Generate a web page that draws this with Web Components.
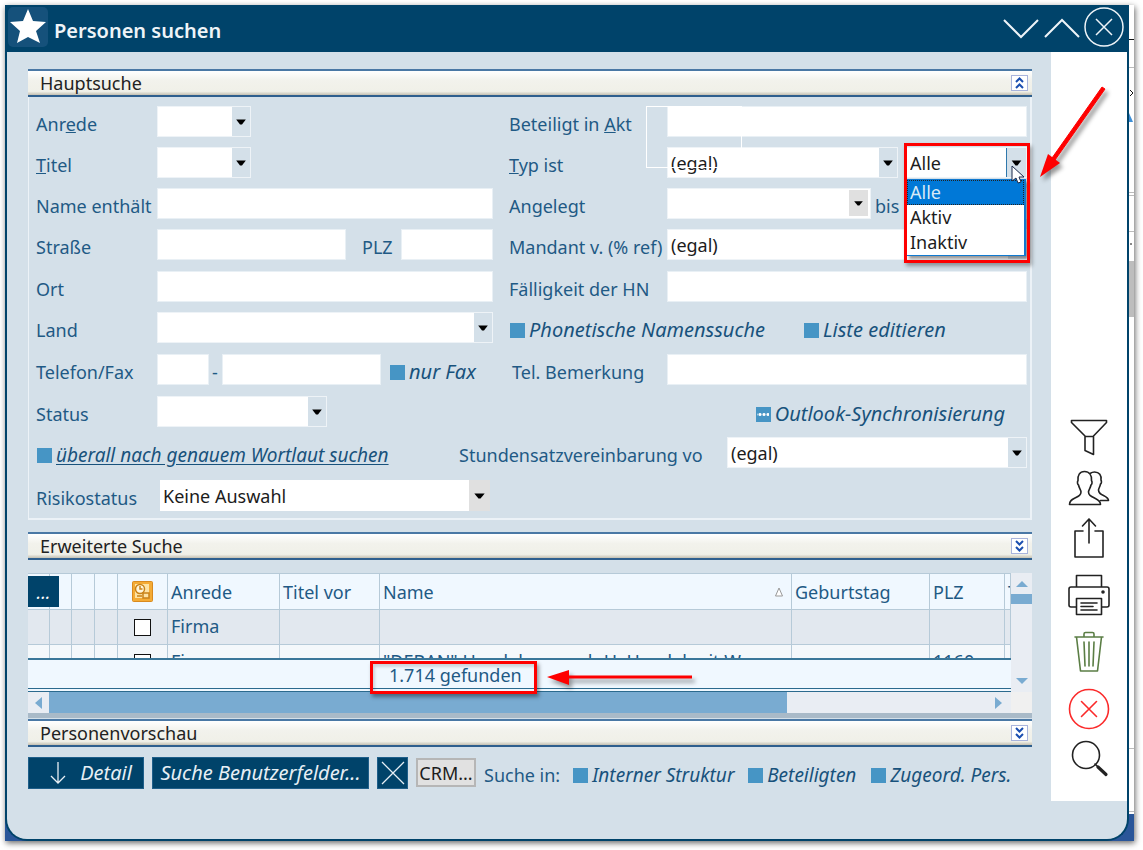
<!DOCTYPE html>
<html lang="de">
<head>
<meta charset="utf-8">
<title>Personen suchen</title>
<style>
  html { background: #fff; }
  body { margin: 0; padding: 5px 9px 9px 5px; font: 18px/26px "Noto Sans", "Open Sans", sans-serif; color: #1f5a85; }
</style>
</head>
<body>
<person-search></person-search>

<template id="t-person-search">
  <style>
    :host { display: flex; box-shadow: 1px 2px 6px rgba(0,0,0,.6); background: linear-gradient(#fff 0 0) top / 100% calc(100% - 27px) no-repeat #2a5699; }
    app-window { flex: 1; min-width: 0; }
    .columns { display: flex; justify-content: space-between; align-items: flex-start; padding-bottom: 37px; }
    main { flex: 1; min-width: 0; padding: 17px 19px 0 21px; }
    .frame { border: 1px solid #ecf2f7; border-width: 0 2px 2px 1px; margin-bottom: 12px; padding: 9px 3px 7px 7px;
      display: grid; grid-template-rows: 41px 41px 41px 42px 41px 42px 42px 41px 43px 31px; }
    text-field, combo-field { --label: 121px; }
    [slot=end] { --label: 158px; }
    .grow { flex: 1; }
    .short { width: 215px; }
    .tight { --label: 13px; }
    result-grid { margin: 13px 0 1px; }
    .picker { position: relative; width: 123px; margin-left: 6px; }
    .actions { display: flex; gap: 8px; padding-top: 10px; height: 32px; align-items: flex-start; white-space: nowrap; }
    .focus { position: absolute; left: 137px; top: 0; width: 94px; height: 60px; border: 1px solid #fff; z-index: 2; pointer-events: none; }
    form-row { position: relative; }
    .in { padding: 5px 4px 0 0; }
    side-strip { flex: none; }
    .exact, .actions check-field { --slant-size: 19px; }
  </style>
  <app-window>
    <span slot="title">Personen suchen</span>
    <div class="columns">
      <main>
        <section-head open>Hauptsuche</section-head>
        <div class="frame">
          <form-row>
            <combo-field slot="start" class="short">Anr<u>e</u>de</combo-field>
            <text-field slot="end" class="grow">Beteiligt in <u>A</u>kt</text-field>
            <div slot="end" class="focus"></div>
          </form-row>
          <form-row>
            <combo-field slot="start" class="short"><u>T</u>itel</combo-field>
            <combo-field slot="end" class="grow" value="(egal)"><u>T</u>yp ist</combo-field>
            <state-picker slot="end" class="picker"></state-picker>
          </form-row>
          <form-row>
            <text-field slot="start" class="grow">Name enthält</text-field>
            <combo-field slot="end" class="grow" grey>Angelegt</combo-field>
            <text-field slot="end" style="--label:29px;width:152px;margin-left:4px">bis</text-field>
          </form-row>
          <form-row>
            <text-field slot="start" class="grow">Straße</text-field>
            <text-field slot="start" style="--label:39px;width:131px;margin-left:16px">PLZ</text-field>
            <combo-field slot="end" class="grow" value="(egal)">Mandant v. (% ref)</combo-field>
          </form-row>
          <form-row>
            <text-field slot="start" class="grow">Ort</text-field>
            <text-field slot="end" class="grow">Fälligkeit der HN</text-field>
          </form-row>
          <form-row>
            <combo-field slot="start" class="grow">Land</combo-field>
            <check-field slot="end" style="width:294px">Phonetische Namenssuche</check-field>
            <check-field slot="end">Liste editieren</check-field>
          </form-row>
          <form-row>
            <text-field slot="start" style="width:173px">Telefon/Fax</text-field>
            <text-field slot="start" class="grow tight">-</text-field>
            <check-field slot="start" style="width:104px;margin-left:8px">nur Fax</check-field>
            <text-field slot="end" class="grow" style="--label:155px;margin-left:3px">Tel. Bemerkung</text-field>
          </form-row>
          <form-row>
            <combo-field slot="start" style="width:291px">Status</combo-field>
            <check-field slot="end" mixed style="margin:0 22px 0 auto">Outlook-Synchronisierung</check-field>
          </form-row>
          <form-row style="--cols:423fr 568fr">
            <check-field slot="start" class="exact" underlined>überall nach genauem Wortlaut suchen</check-field>
            <combo-field slot="end" class="grow" style="--label:268px" value="(egal)">Stundensatzvereinbarung vo</combo-field>
          </form-row>
          <form-row>
            <combo-field slot="start" class="grow" flat style="--label:124px" value="Keine Auswahl">Risikostatus</combo-field>
          </form-row>
        </div>
        <section-head>Erweiterte Suche</section-head>
        <result-grid></result-grid>
        <section-head>Personenvorschau</section-head>
        <div class="actions">
          <action-button style="width:116px;--inset:10px">
            <svg slot="icon" width="16" height="24" fill="none" stroke="currentColor" stroke-width="1.3"><path d="M8 1v21M1 15l7 7 7-7"/></svg>
            Detail</action-button>
          <action-button style="width:217px">Suche Benutzerfelder...</action-button>
          <action-button style="width:31px" name="Zurücksetzen">
            <svg slot="icon" width="26" height="26" fill="none" stroke="currentColor" stroke-width="1.3"><path d="M2 2l22 22M24 2L2 24"/></svg>
          </action-button>
          <action-button plain style="width:60px">CRM...</action-button>
          <span class="in">Suche in:</span>
          <check-field style="width:167px">Interner Struktur</check-field>
          <check-field style="width:115px">Beteiligten</check-field>
          <check-field>Zugeord. Pers.</check-field>
        </div>
      </main>
      <tool-rail></tool-rail>
    </div>
  </app-window>
  <side-strip></side-strip>
</template>

<template id="t-app-window">
  <style>
    :host { display: block; box-sizing: border-box; background: #d4e0e9; border: solid #00436a; border-width: 0 2px 2px; border-radius: 0 0 22px 22px; }
    header { display: flex; align-items: center; height: 47px; margin: 0 -2px; background: #00436a; color: #eef4f8; }
    .star { align-self: flex-start; margin: 2px 0 0 3px; width: 40px; height: 40px; border-radius: 5px; background: #15517b; }
    h1 { flex: 1; margin: 5px 0 0 6px; font-size: 20px; line-height: 26px; font-weight: 600; }
    button { border: 0; padding: 0; background: none; color: inherit; width: 42px; height: 42px; align-self: flex-start; margin-top: 1px; }
    svg { display: block; fill: none; stroke: currentColor; }
    button:last-child { margin-right: 4px; }
  </style>
  <header>
    <svg class="star" viewBox="0 0 40 40"><path fill="#fff" stroke="none" d="M20 2l5 12 13 1-10 9 4 12-12-6-11 6 3-12L2 15l13-1z"/></svg>
    <h1><slot name="title"></slot></h1>
    <button aria-label="Nach unten"><svg width="42" height="42" stroke-width="2"><path d="M5 14l17 17 17-17"/></svg></button>
    <button aria-label="Nach oben"><svg width="42" height="42" stroke-width="2"><path d="M4 31l17-17 17 17"/></svg></button>
    <button aria-label="Schließen"><svg width="42" height="42" stroke-width="1.5"><circle cx="21" cy="21" r="19"/><path d="M13 13l16 16M29 13L13 29"/></svg></button>
  </header>
  <slot></slot>
</template>

<template id="t-section-head">
  <style>
    :host { display: block; }
    div { box-sizing: border-box; height: 28px; display: flex; align-items: center; justify-content: space-between; padding: 0 4px 0 12px;
      border-top: 2px solid #4a78a5; border-bottom: 2px solid #2f5f8e; background: linear-gradient(#fff, #f2f2ec 40%, #f0f0e8 85%, #c4c0b2); color: #222; }
    h2 { margin: 0; font: inherit; }
    button { box-sizing: border-box; width: 17px; height: 16px; padding: 0; border: 1px solid #a9b4dc; background: #fff; color: #1b4fb0; }
    svg { display: block; margin: 0 auto; fill: none; stroke: currentColor; stroke-width: 2; }
    :host([open]) svg { transform: scaleY(-1); }
  </style>
  <div><h2><slot></slot></h2><button aria-label="Bereich umschalten"><svg width="11" height="14"><path d="M2 2l3.500 3.500L9 2M2 8l3.500 3.500L9 8"/></svg></button></div>
</template>

<template id="t-form-row">
  <style>
    :host { display: grid; grid-template-columns: var(--cols, 473fr 518fr); height: 31px; white-space: nowrap; }
    div { display: flex; min-width: 0; }
    .start { padding-right: 16px; }
    .end { position: relative; }
  </style>
  <div class="start"><slot name="start"></slot></div>
  <div class="end"><slot name="end"></slot></div>
</template>

<template id="t-text-field">
  <style>
    :host { display: flex; height: 31px; min-width: 0; }
    label { flex: none; width: var(--label); padding-top: 5px; box-sizing: border-box; }
    input { flex: 1; min-width: 0; width: 0; box-sizing: border-box; border: 1px solid #e9f0f5; border-radius: 0; background: #fff; font: inherit; padding: 0 3px; }
    :host(.tight) label { padding-left: 3px; }
  </style>
  <label for="f"><slot></slot></label><input id="f" type="text">
</template>

<template id="t-combo-field">
  <style>
    :host { display: flex; height: 31px; min-width: 0; }
    label { flex: none; width: var(--label); padding-top: 5px; box-sizing: border-box; }
    span { flex: 1; min-width: 0; position: relative; display: flex; }
    select { appearance: none; width: 100%; box-sizing: border-box; border: 1px solid #eef3f7; border-radius: 0; background: #fff; font: inherit; color: #1c1c1c; padding: 0 22px 0 3px; }
    svg { position: absolute; right: 1px; top: 1px; width: 18px; height: 29px; background: #d4e0e9; pointer-events: none; }
    :host([grey]) svg { background: #e0e0e0; right: 3px; height: 26px; top: 2px; width: 19px; }
    :host([flat]) select { border-width: 0; margin-right: 3px; }
    :host([flat]) svg { background: #e0e0e0; right: 3px; top: 0; width: 21px; height: 31px; }
  </style>
  <label for="f"><slot></slot></label>
  <span><select id="f"><option></option></select><svg viewBox="-9 -15 18 30"><path d="M-5 -2H5L1 3H-1z" fill="#000"/></svg></span>
</template>

<template id="t-state-picker">
  <style>
    :host { display: block; height: 31px; z-index: 3; }
    select { appearance: none; display: block; width: 100%; height: 31px; box-sizing: border-box; border: 1px solid #eef3f7; border-radius: 0; background: #fff; font: inherit; color: #1c1c1c; padding: 0 22px 0 5px; }
    .arrow { position: absolute; right: 1px; top: 1px; width: 20px; height: 29px; box-sizing: border-box; border-left: 1px solid #2f78ac; background: #d4e0e9; }
    ul { position: absolute; left: 2px; top: 32px; width: 120px; box-sizing: border-box; margin: 0; padding: 0; list-style: none; background: #fff; border: 1px solid #1079cf; border-right-width: 2px; color: #1c1c1c; box-shadow: 3px 3px 3px rgba(0,0,0,.4); }
    li { height: 25px; line-height: 25px; padding-left: 3px; }
    li[aria-selected=true] { background: #0078d7; color: #d9e9f5; outline: 1px dotted #222; outline-offset: -1px; }
    .mark { position: absolute; left: 0; top: -4px; width: 126px; height: 120px; box-sizing: border-box; border: 3px solid #fe0000; box-shadow: 2px 3px 4px rgba(0,0,0,.35); }
    .pointer { position: absolute; left: 107px; top: 18px; }
    .callout { position: absolute; left: 130px; top: -67px; filter: drop-shadow(3px 4px 2px rgba(0,0,0,.4)); }
  </style>
  <select aria-label="Aktivstatus"><option>Alle</option><option>Aktiv</option><option>Inaktiv</option></select>
  <svg class="arrow" viewBox="-9 -15 18 30"><path d="M-5 -2H5L1 3H-1z"/></svg>
  <ul role="listbox"><li role="option" aria-selected="true">Alle</li><li role="option">Aktiv</li><li role="option">Inaktiv</li></ul>
  <div class="mark"></div>
  <svg class="pointer" width="14" height="20"><path d="M1 1v15l4-3 2 5 3-1-2-5h5z" fill="#fff" stroke="#1b2a4a"/></svg>
  <svg class="callout" width="76" height="104" fill="#fe0000"><path d="M68 7l3 2-50 71-3-2z" stroke="#fe0000"/><path d="M6 97l8-23 12 9z"/></svg>
</template>

<template id="t-check-field">
  <style>
    :host { display: block; }
    label { display: flex; align-items: center; gap: 4px; padding-top: 5px; font-size: var(--slant-size, 20px); font-style: italic; color: #18527c; white-space: nowrap; }
    input { appearance: none; flex: none; width: 15px; height: 15px; margin: 0 0 0 1px; background: #4695c5; }
    :host([mixed]) input { background: radial-gradient(circle, #fff 1px, transparent 2px) 2px 5px / 4px 5px repeat-x #4695c5; box-shadow: inset 1px 0 #4695c5, inset -2px 0 #4695c5; }
    :host([underlined]) span { text-decoration: underline; text-underline-offset: 2px; }
  </style>
  <label><input type="checkbox"><span><slot></slot></span></label>
</template>

<template id="t-action-button">
  <style>
    :host { display: block; }
    button { width: 100%; height: 32px; box-sizing: border-box; display: flex; align-items: center; justify-content: center; gap: 14px; border: 1px solid #1f5f8a; border-radius: 0; padding: 0 0 0 var(--inset, 0); background: #00436a; color: #e6eff5; font: inherit; font-size: 20px; font-style: italic; white-space: nowrap; }
    :host([plain]) button { height: 29px; margin-top: 1px; border: 2px solid #b6b6b6; background: #e1e1e1; color: #1c1c1c; font-style: normal; font-size: 18px; }
    :host([name]) .text { display: none; }
  </style>
  <button><slot name="icon"></slot><span class="text"><slot></slot></span></button>
</template>

<template id="t-result-grid">
  <style>
    :host { display: block; border-bottom: 5px solid #a9bac8; }
    .view { display: grid; grid-template-columns: 1fr 21px; }
    .rows { position: relative; height: 85px; overflow: hidden; border-top: 1px solid #b6cad8; box-sizing: border-box; }
    table { width: 100%; table-layout: fixed; border-collapse: separate; border-spacing: 0; }
    th, td { box-sizing: border-box; padding: 0 0 0 3px; font-weight: normal; text-align: left; overflow: hidden; white-space: nowrap; border-right: 1px solid #b6cad8; border-bottom: 1px solid #b6cad8; }
    th { height: 36px; background: #f0f8ff; }
    td { height: 35px; background: #f4f8fb; padding-bottom: 2px; }
    .odd td { background: #e2e8ef; }
    td, th { line-height: 26px; }
    .mid { text-align: center; padding: 0; }
    .mid * { display: block; margin: 0 auto; }
    .sorted { display: flex; justify-content: space-between; align-items: center; padding-right: 7px; }
    input { appearance: none; box-sizing: border-box; width: 17px; height: 17px; border: 1px solid #111; outline: 0; background: #fff; }
    .menu { position: absolute; left: 0; top: 2px; width: 31px; height: 31px; border: 0; padding: 0; background: #00436a; color: #fff; font: inherit; font-style: italic; }
    .foot { box-sizing: border-box; height: 34px; border-top: 2px solid #3b7799; border-bottom: 4px double #2b6a8e; background: #f0f8ff; padding: 2px 0 0 361px; display: flex; }
    .hit { position: relative; }
    .mark { position: absolute; left: -19px; top: -1px; width: 167px; height: 33px; box-sizing: border-box; border: 3px solid #fe0000; box-shadow: 2px 3px 4px rgba(0,0,0,.4), inset 2px 3px 3px rgba(0,0,0,.15); }
    .callout { position: absolute; left: 157px; top: 4px; filter: drop-shadow(3px 4px 2px rgba(0,0,0,.4)); }
    .v { background: #e9edf3; display: flex; flex-direction: column; align-items: center; }
    .v i { width: 21px; height: 10px; background: #79abd1; margin: 7px 0 auto; }
    .v svg { margin: 7px 0 0; } .v svg:last-child { margin: 0 0 7px; }
    .h { display: flex; align-items: center; height: 21px; background: #e9edf3; padding-left: 7px; }
    .h i { flex: 738; height: 21px; background: #79abd1; margin-left: 7px; }
    .h b { flex: 208; }
    .h u { width: 21px; height: 21px; background: #f0f0f0; margin-left: 9px; }
    svg { fill: #79abd1; }
  </style>
  <div class="view">
    <div>
      <div class="rows">
        <table>
          <colgroup><col style="width:22px"><col style="width:22px"><col style="width:23px"><col style="width:23px"><col style="width:50px"><col style="width:112px"><col style="width:100px"><col><col style="width:138px"><col style="width:75px"><col style="width:6px"></colgroup>
          <thead><tr><th></th><th></th><th></th><th></th>
            <th class="mid"><svg width="21" height="21"><rect x=".5" y=".5" width="20" height="20" rx="1" fill="#f4ab35" stroke="#d98a1f"/><path d="M3 3h14v14H3z" fill="#fde3a4"/><circle cx="8" cy="8" r="4.500" fill="#fff6dc" stroke="#c98218" stroke-width="1.500"/><path d="M8 5v3h2.500M5 15h5M11 12h6v5h-6z" fill="none" stroke="#c98218" stroke-width="1.500"/></svg></th>
            <th>Anrede</th><th>Titel vor</th>
            <th><div class="sorted">Name <svg width="10" height="12"><path d="M5 2l3.500 8h-7z" fill="#fff" stroke="#999"/></svg></div></th>
            <th>Geburtstag</th><th>PLZ</th><th>T</th></tr></thead>
          <tbody>
            <tr class="odd"><td></td><td></td><td></td><td></td><td class="mid"><input type="checkbox" aria-label="Firma auswählen"></td><td>Firma</td><td></td><td></td><td></td><td></td><td></td></tr>
            <tr><td></td><td></td><td></td><td></td><td class="mid"><input type="checkbox" aria-label="DEBAN auswählen"></td><td>Firma</td><td></td><td>"DEBAN" Handelsges.m.b.H. Handel mit W</td><td></td><td>1160</td><td></td></tr>
          </tbody>
        </table>
        <button class="menu" aria-label="Spalten">...</button>
      </div>
      <div class="foot"><div class="hit">1.714 gefunden<div class="mark"></div>
        <svg class="callout" width="150" height="24" style="fill:#fe0000"><path d="M20 9.500h126v3H20z"/><path d="M1 11l22-7v15z"/></svg></div></div>
    </div>
    <div class="v"><svg width="12" height="7"><path d="M0 7l6-6 6 6z"/></svg><i></i><svg width="12" height="7"><path d="M0 0l6 6 6-6z"/></svg></div>
  </div>
  <div class="h"><svg width="7" height="12"><path d="M7 0L0 6l7 6z"/></svg><i></i><b></b><svg width="7" height="12"><path d="M0 0l7 6-7 6z"/></svg><u></u></div>
</template>

<template id="t-tool-rail">
  <style>
    :host { display: flex; flex: none; box-sizing: border-box; width: 76px; height: 749px; padding-bottom: 20px; flex-direction: column; justify-content: flex-end; align-items: center; background: #fff; }
    button { display: flex; align-items: center; justify-content: center; width: 76px; height: 50px; border: 0; padding: 0; background: none; color: #222; }
    .tall { height: 57px; }
    .gap { margin-top: 3px; }
    svg { fill: none; stroke: currentColor; stroke-width: 1.6; stroke-linejoin: round; stroke-linecap: round; }
  </style>
  <button aria-label="Filter"><svg width="42" height="42"><path d="M3.500 3.500h35v2L25.500 19v18.500L17 33.500V19L3.500 5.500zM17 19.500h8"/></svg></button>
  <button aria-label="Personen"><svg width="42" height="42"><path d="M1.500 37.500h31c0-4-3-5-6-6.500-4-2-6-3-6-6 0-2 2-4 2.500-7 1-.500 1.500-3 .500-4.500.500-5-2-9-7-9s-7 4-6.500 9c-1 1.500-.500 4 .500 4.500.500 3 2.500 5 2.500 7 0 3-2 4-6 6-3 1.500-5.500 2.500-5.500 6.500zM22 6.500c1.500-1 3-1.500 4.500-1.500 5 0 7 3.500 6.500 8 .800 1.500.500 3.500-.500 4-.500 3-2 4.500-2 6 0 3 2 4 5 5.500s5 2.500 5 5h-8"/></svg></button>
  <button aria-label="Teilen"><svg width="42" height="42"><path d="M15 14H7v26h28V14h-8M21 26V2M14.500 9L21 2l6.500 7"/></svg></button>
  <button class="tall gap" aria-label="Drucken"><svg width="42" height="42"><path d="M8.500 13V1.500h25V13M8.500 33H3c-1 0-2-.500-2-2V15c0-1 .500-2 2-2h36c1 0 2 .500 2 2v16c0 1-.500 2-2 2h-5.500M8.500 24.500h25v16h-25zM13 29h16M13 32.500h12M13 36h16"/><circle cx="35" cy="18" r="1" fill="#222"/></svg></button>
  <button class="tall" aria-label="Löschen" style="color:#5b7e45"><svg width="42" height="42"><path d="M7 6h28M8.500 6l4 34h17l4-34M16 6V3c0-1 .500-1.500 1.500-1.500h7c1 0 1.500.500 1.500 1.500v3M16 11l1 24M21 11v24M26 11l-1 24"/></svg></button>
  <button class="tall" aria-label="Abbrechen" style="color:#fb2a2a"><svg width="42" height="42"><circle cx="21" cy="21" r="19.500"/><path d="M13.500 13.500l15 15M28.500 13.500l-15 15"/></svg></button>
  <button style="height:44px" aria-label="Suchen"><svg width="42" height="42"><circle cx="18" cy="17" r="13.500"/><path d="M27 26l3 3"/><path d="M30 29l8 7.500" stroke-width="3.200"/></svg></button>
</template>

<template id="t-side-strip">
  <style>
    :host { display: block; width: 5px; }
    svg { display: block; }
  </style>
  <svg width="5" height="836" fill="none"><path fill="#fff" d="M0 0h6v809H0z"/><path stroke="#111" d="M0 34.500h6"/><path stroke="#bbb" d="M0 62.500h6M0 187.500h6M0 190.500h6M0 226.500h6M0 743.500h6M0 806.500h6"/><path stroke="#111" d="M1 85l3 3-3 3M1 239h2"/><path fill="#3c8ed6" d="M0 108l4 9H0z"/><path fill="#bdbdbd" d="M0 256h6v56H0z"/></svg>
</template>

<script>
  class Part extends HTMLElement {
    constructor() {
      super();
      const t = document.getElementById('t-' + this.localName);
      this.attachShadow({ mode: 'open' }).append(t.content.cloneNode(true));
    }
  }
  class ComboField extends Part {
    connectedCallback() {
      this.shadowRoot.querySelector('option').textContent = this.getAttribute('value') || '';
    }
  }
  class ActionButton extends Part {
    connectedCallback() {
      const name = this.getAttribute('name');
      if (name) this.shadowRoot.querySelector('button').setAttribute('aria-label', name);
    }
  }
  customElements.define('combo-field', ComboField);
  customElements.define('action-button', ActionButton);
  for (const name of ['app-window', 'section-head', 'form-row', 'text-field', 'state-picker', 'check-field',
    'result-grid', 'tool-rail', 'side-strip', 'person-search']) {
    customElements.define(name, class extends Part {});
  }
</script>
</body>
</html>
